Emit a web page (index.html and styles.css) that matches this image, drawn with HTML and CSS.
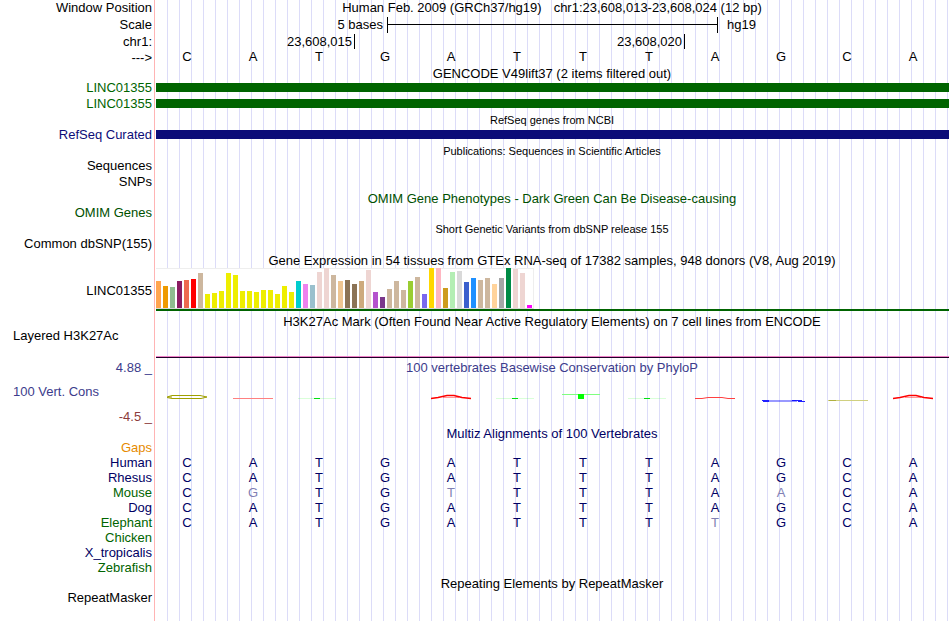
FILE: index.html
```html
<!DOCTYPE html>
<html lang="en">
<head>
<meta charset="utf-8">
<title>Human chr1:23,608,013-23,608,024</title>
<link rel="stylesheet" href="styles.css">
</head>
<body>
<main class="browser">
  <section>
    <div class="row"><div class="label">Window Position</div><div class="position"><span>Human Feb. 2009 (GRCh37/hg19)</span><span>chr1:23,608,013-23,608,024 (12 bp)</span></div></div>
    <div class="row scale-row"><div class="label">Scale</div><div class="scale"><span class="scale-size">5 bases</span><span class="scale-bar"></span><span class="scale-db">hg19</span></div></div>
    <div class="row"><div class="label">chr1:</div><div class="ruler"><span class="tick">23,608,015</span><span class="tick">23,608,020</span></div></div>
    <div class="row tight"><div class="label">---&gt;</div><div class="bases sequence"><span>C</span><span>A</span><span>T</span><span>G</span><span>A</span><span>T</span><span>T</span><span>T</span><span>A</span><span>G</span><span>C</span><span>A</span></div></div>
  </section>

  <section>
    <div class="row tight"><div></div><div class="title">GENCODE V49lift37 (2 items filtered out)</div></div>
    <div class="row green"><div class="label">LINC01355</div><div class="item"></div></div>
    <div class="row green"><div class="label">LINC01355</div><div class="item"></div></div>
  </section>

  <section>
    <div class="row tight"><div></div><div class="title small">RefSeq genes from NCBI</div></div>
    <div class="row refseq"><div class="label">RefSeq Curated</div><div class="item"></div></div>
  </section>

  <section>
    <div class="row tight"><div></div><div class="title small">Publications: Sequences in Scientific Articles</div></div>
    <div class="row"><div class="label">Sequences</div></div>
    <div class="row"><div class="label">SNPs</div></div>
  </section>

  <section class="omim">
    <div class="row tight"><div></div><div class="title">OMIM Gene Phenotypes - Dark Green Can Be Disease-causing</div></div>
    <div class="row"><div class="label">OMIM Genes</div></div>
  </section>

  <section>
    <div class="row tight"><div></div><div class="title small">Short Genetic Variants from dbSNP release 155</div></div>
    <div class="row"><div class="label">Common dbSNP(155)</div></div>
  </section>

  <section>
    <div class="row"><div></div><div class="title">Gene Expression in 54 tissues from GTEx RNA-seq of 17382 samples, 948 donors (V8, Aug 2019)</div></div>
    <div class="row expression"><div class="label">LINC01355</div><div class="gene-model"><div class="chart" id="tissues"></div></div></div>
  </section>

  <section class="histone">
    <div class="row tight"><div></div><div class="title">H3K27Ac Mark (Often Found Near Active Regulatory Elements) on 7 cell lines from ENCODE</div></div>
    <div class="row"><div class="label group">Layered H3K27Ac</div><div class="signal"></div></div>
  </section>

  <section class="conservation">
    <div class="row"><div class="label">4.88 _</div><div class="title">100 vertebrates Basewise Conservation by PhyloP</div></div>
    <div class="row">
      <div class="label group">100 Vert. Cons</div>
      <div class="bases">
        <svg viewBox="0 0 44 33"><path d="M1 21L6 19.500H34L41 21M1 21.500L6 22.500H35L41 21M2 21H6" fill="none" stroke="#a0a000"/></svg>
        <svg viewBox="0 0 44 33"><path d="M1 22.500H41M5 22.500H36" stroke="#ff8080"/></svg>
        <svg viewBox="0 0 44 33"><path d="M0 22.500H38" stroke="#00ff00" stroke-opacity=".15"/><path d="M16 22.500H22" stroke="#00e010"/></svg>
        <svg></svg>
        <svg viewBox="0 0 44 33"><path d="M1 22.500L8 21.500L17 19.500H24L32 21.500L41 22.500" fill="none" stroke="#ff0000" stroke-width="1.500"/><path d="M13 21.500H29" stroke="#ff0000" stroke-opacity=".4"/></svg>
        <svg viewBox="0 0 44 33"><path d="M0 22.500H38" stroke="#00ff00" stroke-opacity=".15"/><path d="M16 22.500H22" stroke="#00e010"/></svg>
        <svg viewBox="0 0 44 33"><path d="M0 18.500H38" stroke="#80ff80"/><path d="M16 18H22V23H16Z" fill="#00ff00"/></svg>
        <svg viewBox="0 0 44 33"><path d="M0 22.500H38" stroke="#00ff00" stroke-opacity=".15"/><path d="M16 22.500H22" stroke="#00e010"/></svg>
        <svg viewBox="0 0 44 33"><path d="M1 22.500H8L14 21.500H28L34 22.500H41" fill="none" stroke="#ff4040"/></svg>
        <svg viewBox="0 0 44 33"><path d="M2 24.500H9M3 25.500H9M38 25.500H45M32 24.500H42" stroke="#2020ff"/><path d="M9 24.500H36M9 25.500H37" stroke="#0000ff" stroke-opacity=".4"/></svg>
        <svg viewBox="0 0 44 33"><path d="M2 24.500H42" stroke="#d0d080"/><path d="M3 24.500H10" stroke="#b0b040"/></svg>
        <svg viewBox="0 0 44 33"><path d="M1 22.500L8 21.500L17 19.500H24L32 21.500L41 22.500" fill="none" stroke="#ff0000" stroke-width="1.500"/><path d="M13 21.500H29" stroke="#ff0000" stroke-opacity=".4"/></svg>
      </div>
    </div>
    <div class="row"><div class="label minimum">-4.5 _</div></div>
  </section>

  <section class="multiz">
    <div class="row tight"><div></div><div class="title">Multiz Alignments of 100 Vertebrates</div></div>
    <table>
      <tr class="gaps"><th scope="row">Gaps</th><td colspan="12"></td></tr>
      <tr><th scope="row">Human</th><td>C</td><td>A</td><td>T</td><td>G</td><td>A</td><td>T</td><td>T</td><td>T</td><td>A</td><td>G</td><td>C</td><td>A</td></tr>
      <tr><th scope="row">Rhesus</th><td>C</td><td>A</td><td>T</td><td>G</td><td>A</td><td>T</td><td>T</td><td>T</td><td>A</td><td>G</td><td>C</td><td>A</td></tr>
      <tr class="alt"><th scope="row">Mouse</th><td>C</td><td class="diff">G</td><td>T</td><td>G</td><td class="diff">T</td><td>T</td><td>T</td><td>T</td><td>A</td><td class="diff">A</td><td>C</td><td>A</td></tr>
      <tr><th scope="row">Dog</th><td>C</td><td>A</td><td>T</td><td>G</td><td>A</td><td>T</td><td>T</td><td>T</td><td>A</td><td>G</td><td>C</td><td>A</td></tr>
      <tr class="alt"><th scope="row">Elephant</th><td>C</td><td>A</td><td>T</td><td>G</td><td>A</td><td>T</td><td>T</td><td>T</td><td class="diff">T</td><td>G</td><td>C</td><td>A</td></tr>
      <tr class="alt"><th scope="row">Chicken</th><td colspan="12"></td></tr>
      <tr><th scope="row">X_tropicalis</th><td colspan="12"></td></tr>
      <tr class="alt"><th scope="row">Zebrafish</th><td colspan="12"></td></tr>
    </table>
  </section>

  <section>
    <div class="row tight"><div></div><div class="title">Repeating Elements by RepeatMasker</div></div>
    <div class="row tight"><div class="label">RepeatMasker</div></div>
  </section>
</main>
<script src="chart.js"></script>
</body>
</html>
```
FILE: styles.css
```css
* { box-sizing: border-box; }

body {
  margin: 0;
  background: #fff;
  color: #000;
  font: 13px/16px "Liberation Sans", Arial, Helvetica, sans-serif;
}

/* Label gutter with its divider, then a guide line every 12px */
.browser {
  min-height: 100vh;
  margin-right: 1px;
  background:
    linear-gradient(to right, #fff 154px, #ffb4b4 154px 155px, #fff 155px) 0 0 / 156px 100% no-repeat,
    linear-gradient(to right, transparent 11px, #dcdcf8 11px) 0 0 / 12px 100% repeat-x;
}

.row {
  display: grid;
  grid-template-columns: 155px minmax(0, 1fr);
  min-height: 16px;
}

.tight { min-height: 15px; line-height: 15px; }

.label { padding-right: 3px; text-align: right; white-space: pre; }
.label.group { padding-left: 13px; text-align: left; }

.title { height: 16px; line-height: 18px; text-align: center; white-space: nowrap; }
.tight .title { height: 15px; line-height: 17px; }
.title.small { font-size: 11px; }
.position { display: flex; justify-content: center; gap: 12px; white-space: nowrap; }

.scale-row { line-height: 18px; }

.scale { display: grid; grid-template-columns: 232fr 331fr 231fr; }
.scale-size { padding-right: 4px; text-align: right; }
.scale-db { padding-left: 9px; }
.scale-bar {
  height: 16px;
  margin-top: 1px;
  border: solid #000;
  border-width: 0 1px;
  background: linear-gradient(#000, #000) 0 7px / 100% 1px no-repeat;
}

.ruler { display: grid; grid-template-columns: 200fr 330fr 264fr; }
.tick { height: 15px; padding-right: 2px; border-right: 1px solid #000; text-align: right; }

.bases {
  display: grid;
  grid-template-columns: repeat(12, minmax(0, 1fr));
  padding-right: 2px;
  text-align: center;
}
.bases span { padding-right: 2px; }
.bases svg { width: 44px; height: 33px; overflow: visible; justify-self: center; }
.sequence { line-height: 13px; }

.item { height: 9px; margin: 3px 0 0 1px; background: currentColor; }
.green { color: #006400; }
.refseq { color: #0c0c78; }
.omim { color: #005000; }

.expression .label { align-self: center; padding-top: 2px; }
.gene-model { margin-left: 1px; border-bottom: 2px solid #006400; }
.chart {
  display: flex;
  align-items: flex-end;
  gap: 2px;
  width: 378px;
  height: 41px;
  background: #fff;
  border-right: 1px solid #eee;
  border-bottom: 1px solid #d8d8d8;
  box-shadow: inset 0 1px #eee;
}
.bar { width: 5px; }

.histone { padding-top: 2px; }
.histone .row + .row { min-height: 30px; }
.histone .group { line-height: 15px; }
.signal { margin-left: 1px; border-bottom: 1px solid #200028; box-shadow: inset 0 -1px #f080c8; }

.conservation { padding-top: 2px; color: #3c3c8c; }
.conservation .title { line-height: 16px; }
.conservation .group { align-self: center; padding-bottom: 2px; }
.conservation .minimum { color: #8c3c3c; }

.multiz { color: #000064; }
table { width: calc(100% - 2px); table-layout: fixed; border-collapse: collapse; line-height: 15px; }
th { width: 155px; padding: 0 3px 0 0; font-weight: normal; text-align: right; }
td { height: 15px; padding: 0 2px 0 0; text-align: center; }
.alt th { color: #006400; }
.gaps th { color: #e68a00; }
.diff { color: #8080b4; }
```
FILE: chart.js
```js
// Bar height in pixels and tissue colour, one pair per tissue.
const tissues = [
  [27, "#ffa54f"], [22, "#ee9a00"], [21, "#8fbc8f"], [27, "#8b1c62"], [28, "#ee6a50"], [29, "#ff0000"],
  [35, "#cdb79e"], [14, "#eeee00"], [15, "#eeee00"], [17, "#eeee00"], [35, "#eeee00"], [33, "#eeee00"],
  [17, "#eeee00"], [17, "#eeee00"], [16, "#eeee00"], [18, "#eeee00"], [18, "#eeee00"], [14, "#eeee00"],
  [22, "#eeee00"], [16, "#eeee00"], [27, "#00cdcd"], [24, "#ee82ee"], [23, "#9ac0cd"], [36, "#eed5d2"],
  [40, "#eed5d2"], [33, "#cdb79e"], [27, "#eec591"], [28, "#8b7355"], [24, "#8b7355"], [27, "#cdaa7d"],
  [38, "#eed5d2"], [16, "#b452cd"], [11, "#7a378b"], [19, "#cdb79e"], [27, "#cdb79e"], [18, "#cdb79e"],
  [27, "#9acd32"], [31, "#cdb79e"], [14, "#7a67ee"], [40, "#ffd700"], [40, "#ffb6c1"], [20, "#cd9b1d"],
  [36, "#b4eeb4"], [37, "#d9d9d9"], [26, "#3a5fcd"], [30, "#1e90ff"], [28, "#cdb79e"], [30, "#cdb79e"],
  [24, "#ffd39b"], [30, "#a6a6a6"], [40, "#008b45"], [39, "#eed5d2"], [35, "#eed5d2"], [3, "#ff00ff"]
];

const chart = document.getElementById("tissues");
for (const [height, color] of tissues) {
  const bar = document.createElement("div");
  bar.className = "bar";
  bar.style.height = height + "px";
  bar.style.background = color;
  chart.append(bar);
}
```
